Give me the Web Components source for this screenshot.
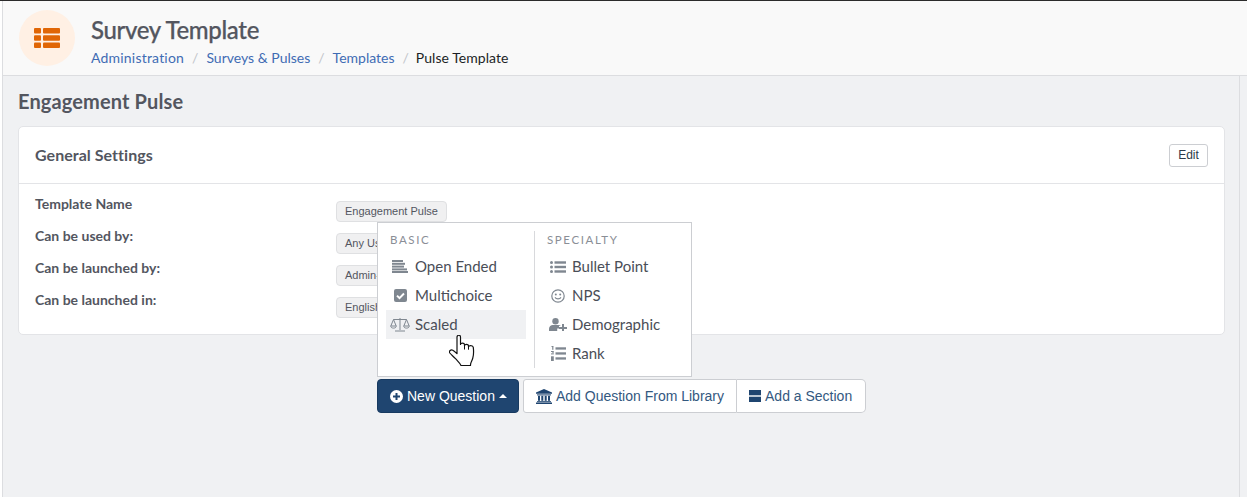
<!DOCTYPE html>
<html lang="en">
<head>
<meta charset="utf-8">
<title>Survey Template</title>
<style>
  html, body { margin: 0; height: 100%; overflow: hidden; }
  body { font-family: "Lato", "Liberation Sans", sans-serif; background: #fff; }
</style>
</head>
<body>
<survey-page>
  <page-header slot="header" title="Survey Template">
    <crumb-link style="letter-spacing:.2px">Administration</crumb-link>
    <crumb-link>Surveys &amp; Pulses</crumb-link>
    <crumb-link>Templates</crumb-link>
    <crumb-link current style="letter-spacing:.05px;margin-left:-1px">Pulse Template</crumb-link>
  </page-header>

  <h1 class="plain" slot="heading">Engagement Pulse</h1>

  <settings-card heading="General Settings">
    <setting-row label="Template Name" value="Engagement Pulse"></setting-row>
    <setting-row label="Can be used by:" value="Any User"></setting-row>
    <setting-row label="Can be launched by:" value="Admin-Only"></setting-row>
    <setting-row label="Can be launched in:" value="English"></setting-row>
  </settings-card>

  <question-bar></question-bar>
</survey-page>

<script>
const ICONS = {
  table: '<svg viewBox="0 0 26 20" width="26" height="20"><g fill="#e06606"><rect x="0" y="0" width="7" height="5.4" rx="1"/><rect x="9" y="0" width="17" height="5.4" rx="1"/><rect x="0" y="7.3" width="7" height="5.4" rx="1"/><rect x="9" y="7.3" width="17" height="5.4" rx="1"/><rect x="0" y="14.6" width="7" height="5.4" rx="1"/><rect x="9" y="14.6" width="17" height="5.4" rx="1"/></g></svg>',
  openEnded: '<svg viewBox="0 0 16 13" width="16" height="13"><g fill="#7f8790"><rect x="0" y="0" width="11" height="2"/><rect x="0" y="2.8" width="13" height="2"/><rect x="0" y="5.6" width="12" height="2"/><rect x="0" y="8.4" width="15" height="2"/><rect x="0" y="11" width="16" height="2"/></g></svg>',
  check: '<svg viewBox="0 0 13 13" width="13" height="13"><rect width="13" height="13" rx="2" fill="#7f8790"/><path d="M3 6.6l2.5 2.5L10 4.5" fill="none" stroke="#fff" stroke-width="2"/></svg>',
  scale: '<svg viewBox="0 0 20 15" width="20" height="15"><g fill="none" stroke="#7f8790" stroke-width="1"><path d="M10 1v12M5 14h10M3.500 2.500h13"/><path d="M3.500 2.500L.8 9h5.400zM16.500 2.500l-2.700 6.500h5.400z"/><path d="M.6 9.300c.5 2.400 5.300 2.400 5.800 0M13.600 9.300c.5 2.400 5.300 2.400 5.800 0"/></g></svg>',
  bullets: '<svg viewBox="0 0 16 12" width="16" height="12"><g fill="#7f8790"><circle cx="1.5" cy="1.5" r="1.5"/><circle cx="1.5" cy="6" r="1.5"/><circle cx="1.5" cy="10.5" r="1.5"/><rect x="4.5" y="0.3" width="11.5" height="2.4"/><rect x="4.5" y="4.8" width="11.5" height="2.4"/><rect x="4.5" y="9.3" width="11.5" height="2.4"/></g></svg>',
  smile: '<svg viewBox="0 0 14 14" width="14" height="14"><circle cx="7" cy="7" r="6.2" fill="none" stroke="#7f8790" stroke-width="1.2"/><circle cx="4.8" cy="5.4" r="1" fill="#7f8790"/><circle cx="9.2" cy="5.4" r="1" fill="#7f8790"/><path d="M4 8.4c1.2 2 4.8 2 6 0" fill="none" stroke="#7f8790" stroke-width="1.1"/></svg>',
  userPlus: '<svg viewBox="0 0 18 13" width="18" height="13"><g fill="#7f8790"><circle cx="6.5" cy="3.2" r="3.2"/><path d="M0 13v-2.2C0 8.400 2 7 3.800 7h5.400c1 0 1.900.4 2.600 1H10v2.500H8.200V13z"/><rect x="10" y="9" width="8" height="2"/><rect x="13" y="6" width="2" height="7"/></g></svg>',
  rank: '<svg viewBox="0 0 15 15" width="15" height="15"><g fill="#7f8790"><rect x="4.500" y="1.300" width="10.500" height="2.300"/><rect x="4.500" y="6.300" width="10.500" height="2.300"/><rect x="4.500" y="11.300" width="10.500" height="2.300"/><rect x="0.500" y="0" width="2" height="1"/><rect x="1.200" y="1" width="1.200" height="2.800"/><rect x="0" y="5" width="2.800" height="1"/><rect x="0" y="7.400" width="2.800" height="1"/><rect x="1.400" y="6" width="1.200" height="1.400"/><rect x="0" y="10.300" width="2.800" height="4.700"/></g></svg>',
  plus: '<svg viewBox="0 0 13 13" width="13" height="13"><circle cx="6.5" cy="6.5" r="6.500" fill="#fff"/><path d="M6.500 3v7M3 6.500h7" stroke="#1f4570" stroke-width="2"/></svg>',
  bank: '<svg viewBox="0 0 16 15" width="16" height="15"><g fill="#1f4570"><path d="M8 0l8 3.600v1.200H0V3.600z"/><rect x="1" y="5.400" width="14" height="1"/><rect x="2" y="6.800" width="2" height="5"/><rect x="5.300" y="6.800" width="2" height="5"/><rect x="8.700" y="6.800" width="2" height="5"/><rect x="12" y="6.800" width="2" height="5"/><rect x="1" y="12.200" width="14" height="1"/><rect x="0" y="13.500" width="16" height="1.500"/></g></svg>',
  section: '<svg viewBox="0 0 12 12" width="12" height="12"><g fill="#1f4570"><rect width="12" height="5.300"/><rect y="6.700" width="12" height="5.300"/></g></svg>'
};

class SurveyPage extends HTMLElement {
  constructor() {
    super();
    this.attachShadow({ mode: 'open' });
    this.shadowRoot.innerHTML = `
      <style>
        :host {
          display: flex;
          flex-direction: column;
          height: 497px;
          border-top: 1px solid #2b2b2b;
          box-sizing: border-box;
          background: #fff;
        }
        .shell {
          flex: 1;
          display: flex;
          flex-direction: column;
          margin-left: 2px;
          border-left: 1px solid #dcdde0;
          min-height: 0;
        }
        .body {
          flex: 1;
          display: grid;
          grid-template-columns: 1237px 1fr;
          background: #f0f1f3;
          min-height: 0;
        }
        .content {
          border-right: 1px solid #dcdde0;
          padding: 0 14px 0 15px;
        }
        ::slotted(h1) {
          margin: 12px 0 12px;
          font: 700 20px/26px "Lato", sans-serif;
          letter-spacing: .12px;
          color: #53565f;
        }
      </style>
      <div class="shell">
        <slot name="header"></slot>
        <div class="body">
          <div class="content">
            <slot name="heading"></slot>
            <slot></slot>
          </div>
          <div></div>
        </div>
      </div>
    `;
  }
}
customElements.define('survey-page', SurveyPage);

class PageHeader extends HTMLElement {
  constructor() {
    super();
    this.attachShadow({ mode: 'open' });
    this.shadowRoot.innerHTML = `
      <style>
        :host {
          display: flex;
          align-items: flex-start;
          height: 75px;
          box-sizing: border-box;
          background: #f9f9f9;
          border-bottom: 1px solid #dcdde0;
          padding: 9px 0 0 16px;
        }
        .badge {
          width: 56px;
          height: 56px;
          border-radius: 50%;
          background: #fff0e4;
          display: flex;
          align-items: center;
          justify-content: center;
          margin-right: 16px;
        }
        h1 {
          margin: 5px 0 0;
          font: 500 24px/30px "Lato", sans-serif;
          letter-spacing: -0.33px;
          -webkit-text-stroke: .25px #53565f;
          color: #53565f;
        }
        nav {
          display: flex;
          margin-top: 3px;
          font: 400 14px/20px "Lato", sans-serif;
        }
      </style>
      <div class="badge">${ICONS.table}</div>
      <div>
        <h1>${this.getAttribute('title')}</h1>
        <nav><slot></slot></nav>
      </div>
    `;
  }
}
customElements.define('page-header', PageHeader);

class CrumbLink extends HTMLElement {
  constructor() {
    super();
    this.attachShadow({ mode: 'open' });
    const current = this.hasAttribute('current');
    this.shadowRoot.innerHTML = `
      <style>
        :host { display: inline-flex; color: ${current ? '#1c1f26' : '#3f6cb4'}; }
        i { font-style: normal; color: #c2c5ca; padding: 0 8px; letter-spacing: 0; }
      </style>
      <slot></slot>${current ? '' : '<i>/</i>'}
    `;
  }
}
customElements.define('crumb-link', CrumbLink);

class SettingsCard extends HTMLElement {
  constructor() {
    super();
    this.attachShadow({ mode: 'open' });
    this.shadowRoot.innerHTML = `
      <style>
        :host {
          display: block;
          height: 209px;
          box-sizing: border-box;
          background: #fff;
          border: 1px solid #e3e4e7;
          border-radius: 5px;
        }
        header {
          display: flex;
          align-items: center;
          justify-content: space-between;
          height: 56px;
          padding: 0 16px;
          border-bottom: 1px solid #e3e4e7;
          font: 700 16px/20px "Lato", sans-serif;
          letter-spacing: .04px;
          color: #53565f;
        }
        button {
          width: 39px;
          height: 23px;
          padding: 0;
          background: #fff;
          border: 1px solid #ccced2;
          border-radius: 3px;
          font: 12px "Liberation Sans", sans-serif;
          letter-spacing: 0;
          color: #2d3a4a;
        }
        .rows { padding: 10px 16px 0; }
      </style>
      <header>${this.getAttribute('heading')}<button>Edit</button></header>
      <div class="rows"><slot></slot></div>
    `;
  }
}
customElements.define('settings-card', SettingsCard);

class SettingRow extends HTMLElement {
  constructor() {
    super();
    this.attachShadow({ mode: 'open' });
    this.shadowRoot.innerHTML = `
      <style>
        :host {
          display: grid;
          grid-template-columns: 301px 1fr;
          height: 32px;
        }
        .label {
          font: 700 14px/20px "Lato", sans-serif;
          color: #53565f;
        }
        .value {
          justify-self: start;
          height: 19px;
          margin-top: 7px;
          padding: 0 8px;
          background: #f0f0f1;
          border: 1px solid #dfe0e2;
          border-radius: 4px;
          font: 11px/19px "Liberation Sans", sans-serif;
          color: #53565f;
          white-space: nowrap;
        }
      </style>
      <span class="label">${this.getAttribute('label')}</span>
      <span class="value">${this.getAttribute('value')}</span>
    `;
  }
}
customElements.define('setting-row', SettingRow);

class MenuItem extends HTMLElement {
  constructor() {
    super();
    this.attachShadow({ mode: 'open' });
    this.shadowRoot.innerHTML = `
      <style>
        :host {
          display: flex;
          align-items: center;
          height: 29px;
          padding-left: 4px;
          font: 400 15px/29px "Lato", sans-serif;
          color: #4a4e57;
          white-space: nowrap;
        }
        :host([active]) { background: #f0f1f3; }
        .ico {
          width: 20px;
          margin-right: var(--icon-gap, 5px);
          display: flex;
          justify-content: center;
        }
      </style>
      <span class="ico">${ICONS[this.getAttribute('icon')]}</span>
      <slot></slot>
    `;
  }
}
customElements.define('menu-item', MenuItem);

class QuestionMenu extends HTMLElement {
  constructor() {
    super();
    this.attachShadow({ mode: 'open' });
    this.shadowRoot.innerHTML = `
      <style>
        :host {
          position: absolute;
          left: 0;
          bottom: 36px;
          width: 315px;
          height: 155px;
          box-sizing: border-box;
          background: #fff;
          border: 1px solid #ccced2;
          display: grid;
          grid-template-columns: 156px 1fr;
          z-index: 2;
        }
        .basic { padding: 7px 8px 0; }
        .specialty {
          --icon-gap: 4px;
          margin: 8px 0 10px;
          padding-left: 9px;
          border-left: 1px solid #d8d9dc;
        }
        h6 {
          margin: 0;
          font: 400 11.5px/20px "Lato", sans-serif;
          letter-spacing: 1.6px;
          color: #8a8e96;
        }
        .basic h6 { height: 22px; margin-left: 4px; }
        .specialty h6 { height: 21px; line-height: 18px; margin-left: 3px; }
        svg {
          position: absolute;
          left: 71px;
          top: 112px;
        }
      </style>
      <div class="basic">
        <h6>BASIC</h6>
        <menu-item icon="openEnded">Open Ended</menu-item>
        <menu-item icon="check">Multichoice</menu-item>
        <menu-item icon="scale" active>Scaled</menu-item>
      </div>
      <div class="specialty">
        <h6>SPECIALTY</h6>
        <menu-item icon="bullets">Bullet Point</menu-item>
        <menu-item icon="smile">NPS</menu-item>
        <menu-item icon="userPlus">Demographic</menu-item>
        <menu-item icon="rank">Rank</menu-item>
      </div>
      <svg viewBox="0 0 26 33" width="26" height="33">
        <path d="M8 2.200c0-2.600 3.500-2.600 3.500 0V9.500c0-1.800 4-1.800 4 .2v1c0-1.800 4-1.800 4 .2v1c0-1.700 4.500-1.700 4.800.5.400 3.600.400 7.600-.5 10.600-.5 2-1.400 3.500-2 5.200-.3 1.200-.3 2.100-.3 2.300H12c-1-2.300-3-4-5.500-6.800C4.500 21.500 2 19.500.8 18c-1.200-1.800 1-3.800 3-2.800 1.800 1 3 2.300 4.200 3.500z" fill="#fff" stroke="#111" stroke-width="1.200" stroke-linejoin="round"/>
        <path d="M15.500 9.500v5M19.500 10.700v4" fill="none" stroke="#111" stroke-width="1"/>
      </svg>
    `;
  }
}
customElements.define('question-menu', QuestionMenu);

class QuestionBar extends HTMLElement {
  constructor() {
    super();
    this.attachShadow({ mode: 'open' });
    this.shadowRoot.innerHTML = `
      <style>
        :host {
          position: relative;
          display: flex;
          width: max-content;
          margin: 44px 0 0 359px;
          gap: 4px;
          font: 14px "Liberation Sans", sans-serif;
        }
        button {
          display: flex;
          align-items: center;
          gap: 4px;
          height: 34px;
          box-sizing: border-box;
          padding: 0 12px;
          font: inherit;
          white-space: nowrap;
        }
        .primary {
          background: #1f4570;
          border: 1px solid #183a60;
          border-radius: 4px;
          color: #fff;
          padding-right: 11px;
        }
        .group { display: flex; }
        .group button {
          background: #fff;
          border: 1px solid #ccced2;
          color: #33587f;
        }
        .group button:first-child { border-radius: 3px 0 0 3px; }
        .group button + button { border-left: 0; border-radius: 0 5px 5px 0; padding-right: 13px; }
        .caret {
          width: 0;
          height: 0;
          border: 4px solid transparent;
          border-top: 0;
          border-bottom-color: #fff;
        }
      </style>
      <question-menu></question-menu>
      <button class="primary">${ICONS.plus}New Question<span class="caret"></span></button>
      <div class="group">
        <button>${ICONS.bank}Add Question From Library</button>
        <button>${ICONS.section}Add a Section</button>
      </div>
    `;
  }
}
customElements.define('question-bar', QuestionBar);
</script>
</body>
</html>
